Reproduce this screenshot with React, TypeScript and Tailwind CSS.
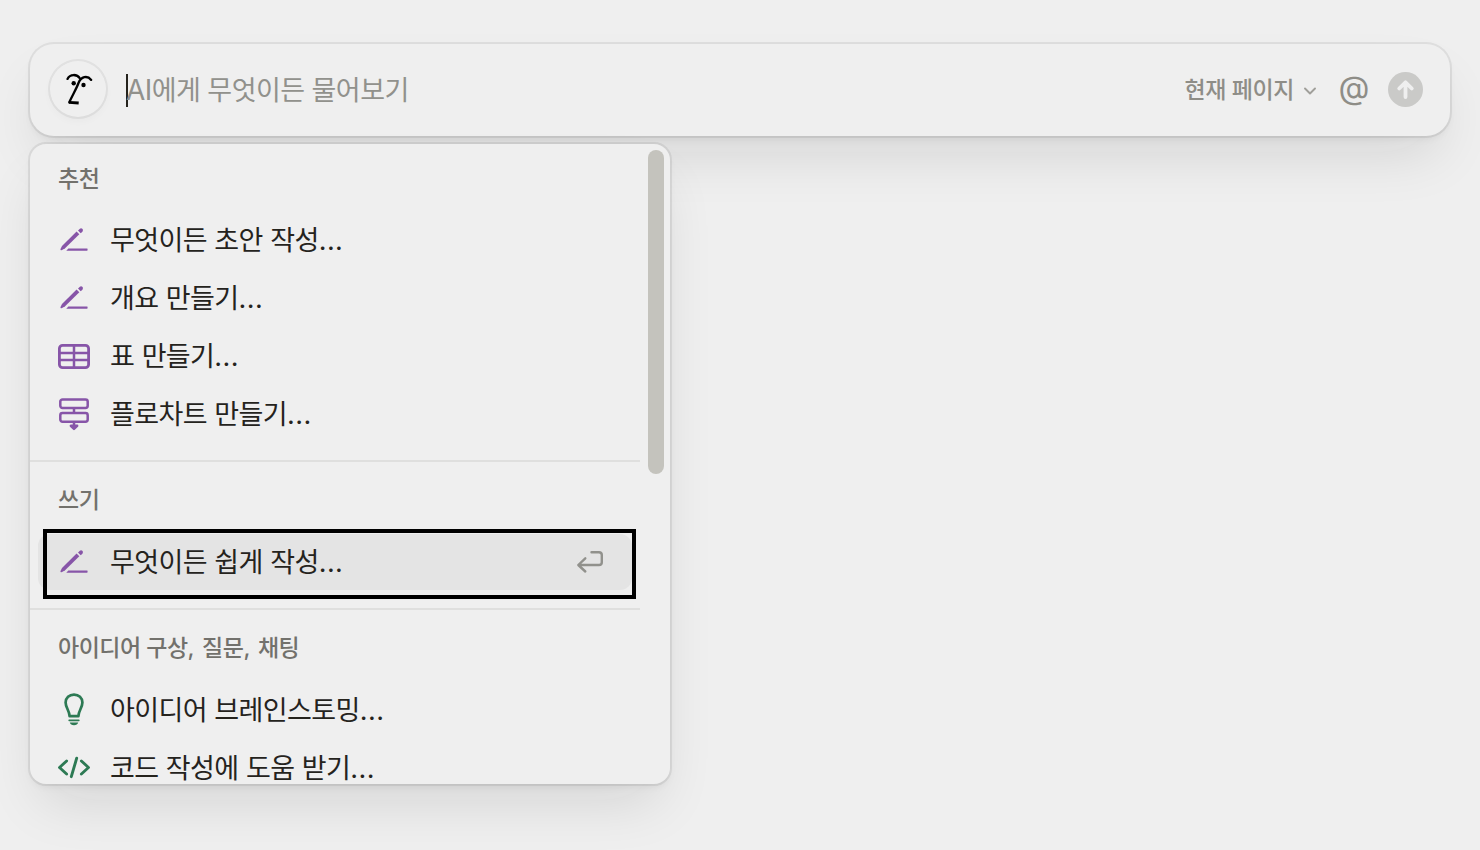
import type { ReactNode } from "react";

function PenIcon() {
  return (
    <svg viewBox="0 0 32 32" className="size-8 shrink-0 overflow-visible text-[#8755a8]" fill="currentColor">
      <path d="M2.500 25.100 4 21.900 18.600 7.500 21.300 10.200 6.800 24.500 3.500 26.300Q2.200 26.600 2.500 25.100Z" />
      <path d="M20 6.400 21.900 4.700Q23.300 3.800 24.600 5.100 25.400 6.500 24.400 7.700L22.700 9.200Z" />
      <path d="M10.300 24.500H29.300Q30 25.400 29.300 26.700H8.300Z" />
    </svg>
  );
}

function TableIcon() {
  return (
    <svg viewBox="0 0 32 32" className="size-8 shrink-0 text-[#8755a8]" fill="none" stroke="currentColor">
      <rect x="1.400" y="5.400" width="29.200" height="22.200" rx="3.200" strokeWidth="2.800" />
      <path d="M16 5v23M1.500 13h29M1.500 20h29" strokeWidth="2.500" />
    </svg>
  );
}

function FlowIcon() {
  return (
    <svg viewBox="0 0 32 32" className="size-8 shrink-0 overflow-visible text-[#8755a8]" fill="none" stroke="currentColor" strokeWidth="2.500">
      <rect x="2.300" y="1.400" width="27.400" height="8.600" rx="2.200" />
      <rect x="2.300" y="15" width="27.400" height="8.800" rx="2.200" />
      <path d="M16 10v5M16 23.500v4" />
      <path d="M12.800 27.800h6.400L16 31Z" fill="currentColor" strokeWidth="2.400" strokeLinejoin="round" />
    </svg>
  );
}

function BulbIcon() {
  return (
    <svg viewBox="0 0 32 32" className="size-8 shrink-0 overflow-visible text-[#2d7a54]" fill="none" stroke="currentColor">
      <path d="M11.6 22.2C11.4 16.5 7.6 13.5 7.6 8.6 7.6 3.8 11.3.6 16 .6s8.4 3.2 8.4 8c0 4.900-3.800 7.900-4 13.600Z" strokeWidth="2.700" strokeLinejoin="round" />
      <path d="M11.200 26.300h9.600" strokeWidth="1.700" strokeLinecap="round" />
      <path d="M11.800 28.600h8.400Q19.400 31.200 16 31.200t-4.200-2.600Z" fill="currentColor" stroke="none" />
    </svg>
  );
}

function CodeIcon() {
  return (
    <svg viewBox="0 0 32 32" className="size-8 shrink-0 text-[#2d7a54]" fill="none" stroke="currentColor" strokeWidth="2.9" strokeLinecap="round" strokeLinejoin="round">
      <path d="M8.600 9 1.500 15.500l7.100 6.500M23.400 9l7.100 6.500-7.100 6.500M18.700 6.200 13.300 24.700" />
    </svg>
  );
}

function Label({ children, first }: { children: ReactNode; first?: boolean }) {
  return (
    <div className={`flex items-center pl-7 text-[23px] font-medium tracking-[-0.5px] whitespace-pre text-[#72716c] ${first ? "h-[68px] pt-[3px]" : "h-[72px] pt-1"}`}>
      {children}
    </div>
  );
}

function Comma() {
  return <span className="tracking-[0.8px]">, </span>;
}

function Row({ icon, children }: { icon: ReactNode; children: ReactNode }) {
  return (
    <div className="mx-2 flex h-14 items-center gap-5 px-5">
      {icon}
      <span className="pt-0.5 text-[27px] tracking-[-0.6px] whitespace-nowrap [word-spacing:0.4px]">
        {children}
        <span className="tracking-[0.4px]">...</span>
      </span>
    </div>
  );
}

const surface =
  "bg-[#efefef] shadow-[0_0_0_2px_rgba(15,15,15,0.07),0_4px_8px_-2px_rgba(15,15,15,0.07),0_28px_56px_-12px_rgba(15,15,15,0.12)]";

export default function App() {
  return (
    <div className="h-[850px] w-[1480px] overflow-hidden bg-[#efefef] px-[30px] pt-11 font-['Inter','Noto_Sans_CJK_KR',sans-serif] text-[#25231d]">
      <div className={`flex h-[92px] items-center rounded-[24px] pr-[27px] pb-0.5 pl-5 ${surface}`}>
        <div className="flex size-14 shrink-0 items-center justify-center rounded-full shadow-[0_0_0_2px_rgba(15,15,15,0.06),0_4px_8px_rgba(15,15,15,0.03)]">
          <svg viewBox="50 61 56 56" className="size-14" fill="none" stroke="black" strokeWidth="2.300" strokeLinecap="round">
            <path d="M67.500 78.900C70 73.800 77 73.800 80 78.500" />
            <path d="M69.300 102.200C73 94 76.300 89 78.500 83 81 76.600 87.200 75 91.200 79.900" />
            <path d="M68.800 102.300 78.700 103" strokeWidth="2.800" strokeLinecap="butt" />
            <circle cx="73.700" cy="83.300" r="2.200" fill="black" stroke="none" />
            <circle cx="83.500" cy="85" r="2.200" fill="black" stroke="none" />
          </svg>
        </div>
        <div className="mt-0.5 ml-5 h-[33px] w-0.5 bg-[#25231d]" />
        <div className="-ml-0.5 flex-1 pt-0.5 text-[27px] tracking-[-0.55px] text-[#91918c]">
          <span className="text-[28px]">AI</span>에게 무엇이든 물어보기
        </div>
        <div className="pt-[3px] text-[23px] font-medium tracking-[-0.4px] text-[#8e8d87]">현재 페이지</div>
        <svg viewBox="0 0 12 8" className="mt-[3px] ml-[10px] h-2 w-3" fill="none" stroke="#a09f9a" strokeWidth="1.900" strokeLinecap="round" strokeLinejoin="round">
          <path d="M1 1.500 6 6.500 11 1.500" />
        </svg>
        <div className="-mt-0.5 ml-[22px] flex w-8 justify-center text-[32px] text-[#8e8d87]">@</div>
        <svg viewBox="0 0 35 35" className="ml-[18px] size-[35px] shrink-0">
          <circle cx="17.500" cy="17.500" r="17.500" fill="#cacac8" />
          <path d="M17.500 25V11M11.200 16.500 17.500 10.300l6.300 6.200" fill="none" stroke="#efefef" strokeWidth="3.800" strokeLinecap="round" strokeLinejoin="round" />
        </svg>
      </div>

      <div className={`mt-2 flex h-[640px] w-[640px] overflow-hidden rounded-[16px] ${surface}`}>
        <div className="w-[610px]">
          <section className="border-b-2 border-[#dfdfde] pb-[18px]">
            <Label first>추천</Label>
            <div className="flex flex-col gap-0.5">
              <Row icon={<PenIcon />}>무엇이든 초안 작성</Row>
              <Row icon={<PenIcon />}>개요 만들기</Row>
              <Row icon={<TableIcon />}>표 만들기</Row>
              <Row icon={<FlowIcon />}>플로차트 만들기</Row>
            </div>
          </section>
          <section className="border-b-2 border-[#dfdfde] pb-[18px]">
            <Label>쓰기</Label>
            <div className="relative mr-2 ml-2 flex h-14 items-center justify-between rounded-[12px] bg-[#e4e4e4] pr-7">
              <div className="-ml-2">
                <Row icon={<PenIcon />}>무엇이든 쉽게 작성</Row>
              </div>
              <svg viewBox="0 0 28 24" className="h-6 w-7" fill="none" stroke="#91918c" strokeWidth="2.400" strokeLinecap="round" strokeLinejoin="round">
                <path d="M15.500 2.300H23Q25.800 2.300 25.800 5.100V12.200Q25.800 15 23 15H2.500M9.300 8.300 2.300 15l7 6.500" />
              </svg>
              <div className="absolute -top-[5px] -right-1 h-[70px] w-[593px] border-4 border-black" />
            </div>
          </section>
          <section>
            <Label>
              아이디어 구상<Comma />질문<Comma />채팅
            </Label>
            <div className="flex flex-col gap-0.5">
              <Row icon={<BulbIcon />}>아이디어 브레인스토밍</Row>
              <Row icon={<CodeIcon />}>코드 작성에 도움 받기</Row>
            </div>
          </section>
        </div>
        <div className="mt-1.5 ml-2 h-[324px] w-4 rounded-full bg-[#c4c3bd]" />
      </div>
    </div>
  );
}
